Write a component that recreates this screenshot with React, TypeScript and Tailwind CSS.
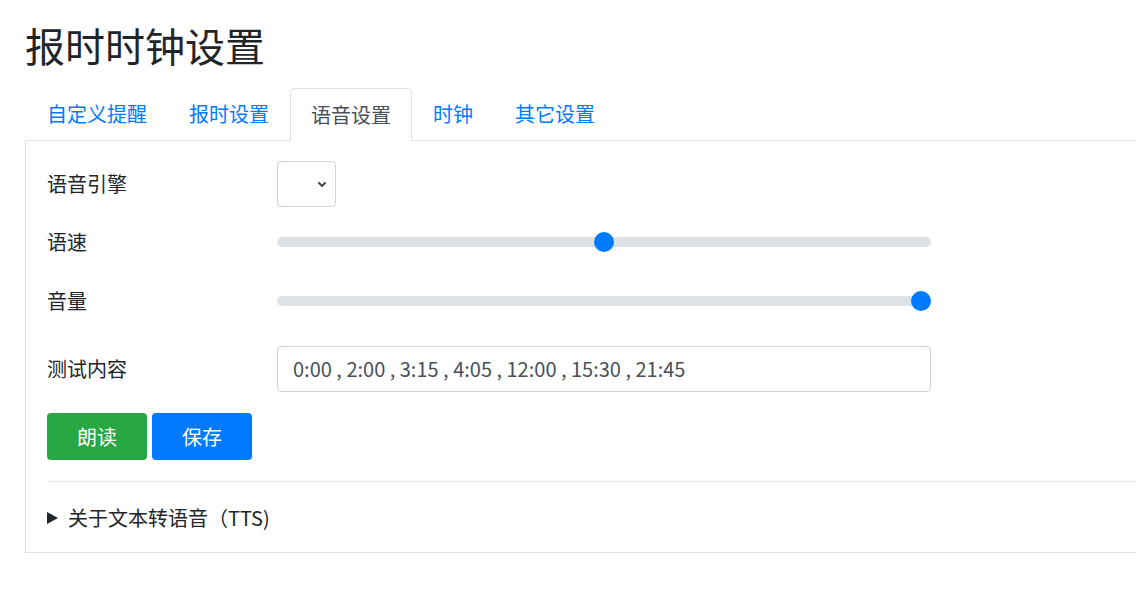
import React from 'react';

const tabs = ['自定义提醒', '报时设置', '语音设置', '时钟', '其它设置'];
const activeTab = 2;

const Slider = ({ value }: { value: number }) => (
  <div className="relative h-[20px] w-[654px] flex items-center">
    <div className="h-[10px] w-full rounded-full bg-[#dee2e6]" />
    <div
      className="absolute top-0 h-[20px] w-[20px] rounded-full bg-[#007bff]"
      style={{ left: `${(value * 634) / 100}px` }}
    />
  </div>
);

const Row = ({ label, children, className }: { label: string; children: React.ReactNode; className?: string }) => (
  <div className={`flex items-center h-[46px] ${className ?? ''}`}>
    <div className="w-[230px] text-[20px] text-[#212529]">{label}</div>
    {children}
  </div>
);

export default function App() {
  return (
    <div
      className="w-[1136px] h-[589px] overflow-hidden bg-white"
      style={{ fontFamily: '"Noto Sans CJK SC", "Noto Sans", sans-serif' }}
    >
      <div className="w-[1200px] pl-[25px] pt-[19px]">
        <h1 className="text-[40px] leading-[52px] text-[#212529] font-normal">报时时钟设置</h1>

        <div className="mt-[17px] flex border-b border-[#dee2e6] h-[53px] pl-[1px]">
          {tabs.map((t, i) => (
            <div
              key={t}
              className={
                i === activeTab
                  ? 'px-[20px] h-[53px] flex items-center text-[20px] text-[#495057] bg-white border border-b-0 border-[#dee2e6] rounded-t-[5px]'
                  : 'px-[20px] h-[52px] flex items-center text-[20px] text-[#007bff] border border-transparent'
              }
            >
              {t}
            </div>
          ))}
        </div>

        <div className="border-l border-b border-[#dee2e6] pl-[21px] pt-[20px] pb-[19px]">
          <Row label="语音引擎">
            <div className="w-[59px] h-[46px] border border-[#ced4da] rounded-[4px] flex items-center justify-end pr-[8px]">
              <svg width="10" height="7" viewBox="0 0 10 7" fill="none">
                <path d="M1.5 1.5 L5 5 L8.5 1.5" stroke="#343a40" strokeWidth="1.8" />
              </svg>
            </div>
          </Row>
          <Row label="语速" className="mt-[12px]">
            <Slider value={50} />
          </Row>
          <Row label="音量" className="mt-[13px]">
            <Slider value={100} />
          </Row>
          <Row label="测试内容" className="mt-[22px]">
            <div className="w-[654px] h-[46px] border border-[#ced4da] rounded-[4px] flex items-center px-[15px] text-[20px] text-[#495057]">
              0:00 , 2:00 , 3:15 , 4:05 , 12:00 , 15:30 , 21:45
            </div>
          </Row>

          <div className="mt-[21px] flex gap-[5px]">
            <button className="w-[100px] h-[47px] rounded-[4px] bg-[#28a745] text-white text-[20px]">朗读</button>
            <button className="w-[100px] h-[47px] rounded-[4px] bg-[#007bff] text-white text-[20px]">保存</button>
          </div>

          <div className="mt-[21px] border-t border-[#e5e5e5]" />

          <div className="mt-[21px] flex items-center h-[30px] text-[20px] text-[#212529]">
            <svg width="11" height="12" viewBox="0 0 11 12" className="mr-[10px]">
              <path d="M0 0 L11 6 L0 12 Z" fill="#212529" />
            </svg>
            <span>关于文本转语音（TTS)</span>
          </div>
        </div>
      </div>
    </div>
  );
}
